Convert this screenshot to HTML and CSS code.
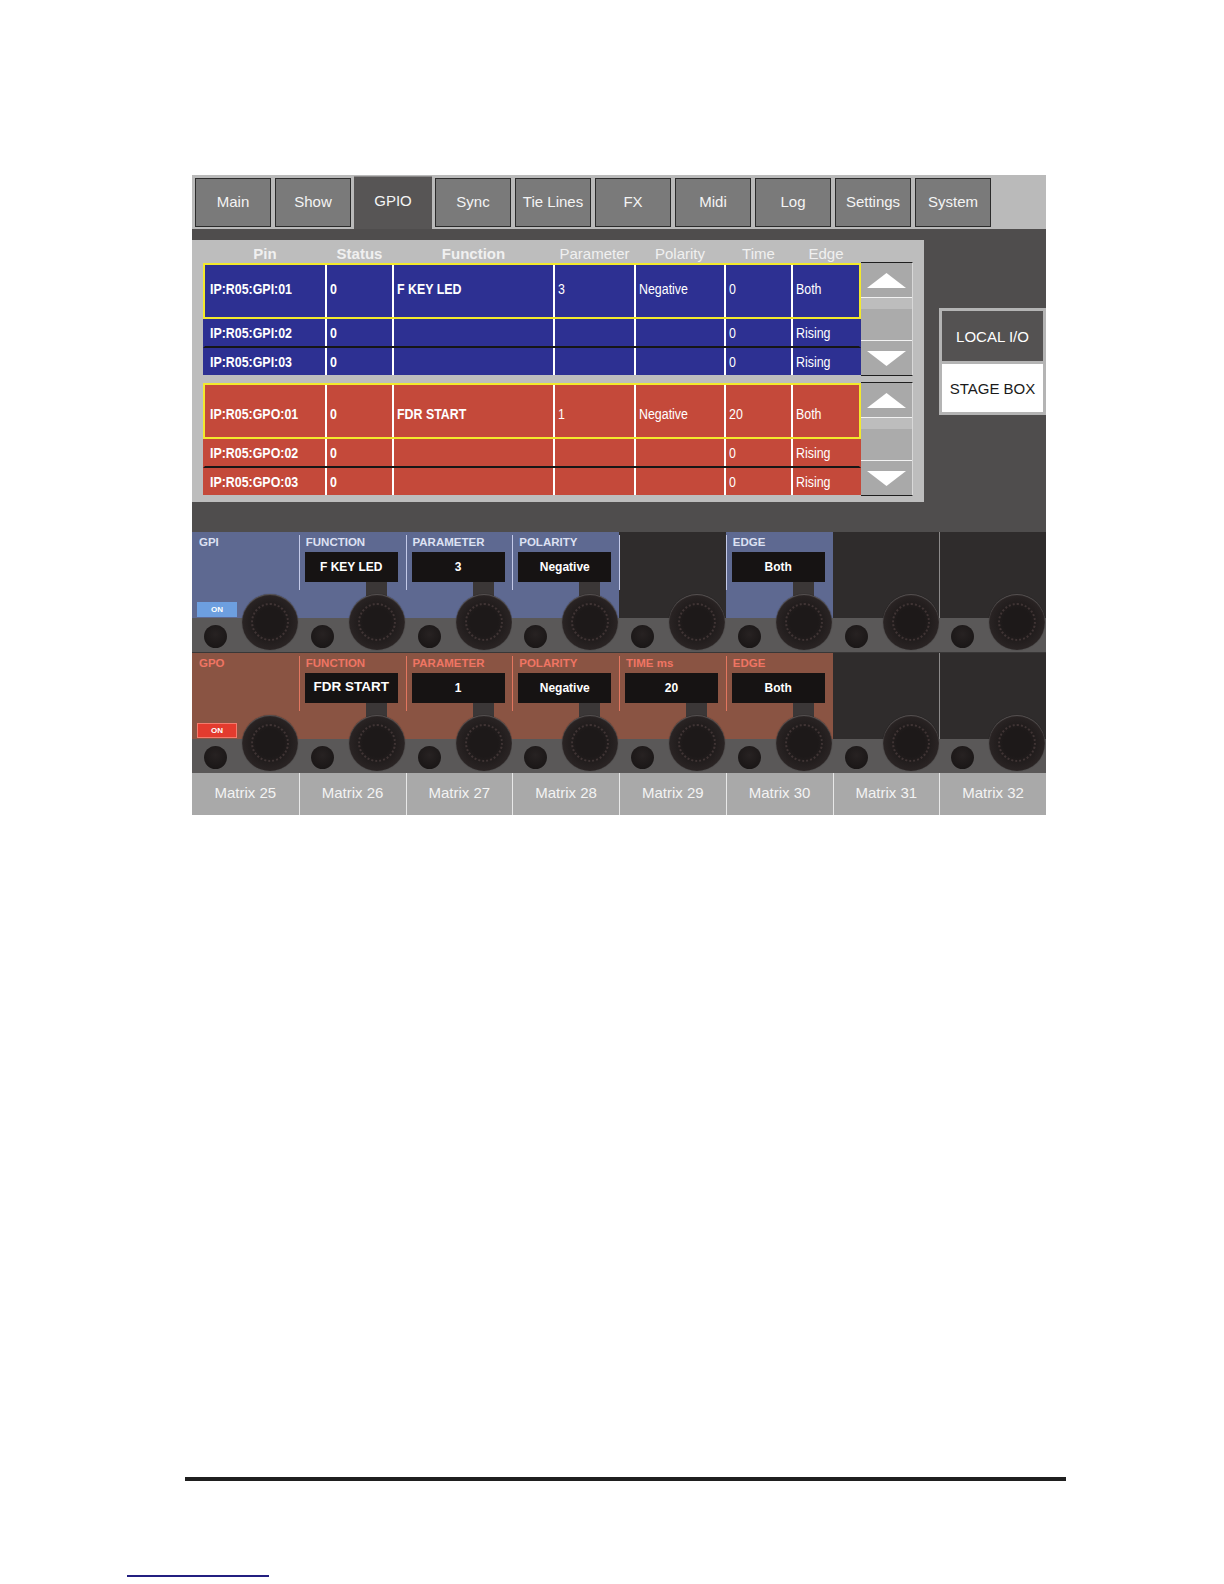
FILE: index.html
```html
<!DOCTYPE html>
<html>
<head>
<meta charset="utf-8">
<title>GPIO</title>
<link rel="stylesheet" href="styles.css">
</head>
<body>
<div class="ui">
  <div class="tabbar">
    <div class="tab">Main</div>
    <div class="tab">Show</div>
    <div class="tab active">GPIO</div>
    <div class="tab">Sync</div>
    <div class="tab">Tie Lines</div>
    <div class="tab">FX</div>
    <div class="tab">Midi</div>
    <div class="tab">Log</div>
    <div class="tab">Settings</div>
    <div class="tab">System</div>
  </div>

  <div class="main">
    <div class="panel">
      <div class="thead">
        <div class="hc w1 b">Pin</div>
        <div class="hc w2 b">Status</div>
        <div class="hc w3 b">Function</div>
        <div class="hc w4">Parameter</div>
        <div class="hc w5">Polarity</div>
        <div class="hc w6">Time</div>
        <div class="hc w7">Edge</div>
      </div>

      <div class="block">
        <div class="rows">
          <div class="row gpi sel">
            <div class="cell w1 b"><span>IP:R05:GPI:01</span></div>
            <div class="cell w2 b"><span>0</span></div>
            <div class="cell w3 b"><span>F KEY LED</span></div>
            <div class="cell w4"><span>3</span></div>
            <div class="cell w5"><span>Negative</span></div>
            <div class="cell w6"><span>0</span></div>
            <div class="cell w7"><span>Both</span></div>
          </div>
          <div class="row gpi r2">
            <div class="cell w1 b"><span>IP:R05:GPI:02</span></div>
            <div class="cell w2 b"><span>0</span></div>
            <div class="cell w3"></div>
            <div class="cell w4"></div>
            <div class="cell w5"></div>
            <div class="cell w6"><span>0</span></div>
            <div class="cell w7"><span>Rising</span></div>
          </div>
          <div class="row gpi r3">
            <div class="cell w1 b"><span>IP:R05:GPI:03</span></div>
            <div class="cell w2 b"><span>0</span></div>
            <div class="cell w3"></div>
            <div class="cell w4"></div>
            <div class="cell w5"></div>
            <div class="cell w6"><span>0</span></div>
            <div class="cell w7"><span>Rising</span></div>
          </div>
        </div>
        <div class="scroll">
          <div class="sbtn up"><svg width="39" height="15" viewBox="0 0 39 15"><polygon points="0,15 19.5,0 39,15" fill="#fff"/></svg></div>
          <div class="smid"></div>
          <div class="sbtn down"><svg width="39" height="15" viewBox="0 0 39 15"><polygon points="0,0 39,0 19.5,15" fill="#fff"/></svg></div>
        </div>
      </div>

      <div class="block">
        <div class="rows">
          <div class="row gpo sel">
            <div class="cell w1 b"><span>IP:R05:GPO:01</span></div>
            <div class="cell w2 b"><span>0</span></div>
            <div class="cell w3 b"><span>FDR START</span></div>
            <div class="cell w4"><span>1</span></div>
            <div class="cell w5"><span>Negative</span></div>
            <div class="cell w6"><span>20</span></div>
            <div class="cell w7"><span>Both</span></div>
          </div>
          <div class="row gpo r2">
            <div class="cell w1 b"><span>IP:R05:GPO:02</span></div>
            <div class="cell w2 b"><span>0</span></div>
            <div class="cell w3"></div>
            <div class="cell w4"></div>
            <div class="cell w5"></div>
            <div class="cell w6"><span>0</span></div>
            <div class="cell w7"><span>Rising</span></div>
          </div>
          <div class="row gpo r3">
            <div class="cell w1 b"><span>IP:R05:GPO:03</span></div>
            <div class="cell w2 b"><span>0</span></div>
            <div class="cell w3"></div>
            <div class="cell w4"></div>
            <div class="cell w5"></div>
            <div class="cell w6"><span>0</span></div>
            <div class="cell w7"><span>Rising</span></div>
          </div>
        </div>
        <div class="scroll">
          <div class="sbtn up"><svg width="39" height="15" viewBox="0 0 39 15"><polygon points="0,15 19.5,0 39,15" fill="#fff"/></svg></div>
          <div class="smid"></div>
          <div class="sbtn down"><svg width="39" height="15" viewBox="0 0 39 15"><polygon points="0,0 39,0 19.5,15" fill="#fff"/></svg></div>
        </div>
      </div>
    </div>

    <div class="srcbox">
      <div class="src local">LOCAL I/O</div>
      <div class="src stage">STAGE BOX</div>
    </div>
  </div>

  <div class="controls">
    <div class="crow gpi">
      <div class="ch">
        <div class="top c"><div class="lbl">GPI</div><div class="onbtn">ON</div></div>
        <div class="band"><span class="btn"></span></div><span class="knob"></span>
      </div>
      <div class="ch">
        <div class="top c sep"><div class="lbl">FUNCTION</div><div class="disp">F KEY LED</div><div class="conn"></div></div>
        <div class="band"><span class="btn"></span></div><span class="knob"></span>
      </div>
      <div class="ch">
        <div class="top c sep"><div class="lbl">PARAMETER</div><div class="disp">3</div><div class="conn"></div></div>
        <div class="band"><span class="btn"></span></div><span class="knob"></span>
      </div>
      <div class="ch">
        <div class="top c sep"><div class="lbl">POLARITY</div><div class="disp">Negative</div><div class="conn"></div></div>
        <div class="band"><span class="btn"></span></div><span class="knob"></span>
      </div>
      <div class="ch">
        <div class="top d sep"></div>
        <div class="band"><span class="btn"></span></div><span class="knob"></span>
      </div>
      <div class="ch">
        <div class="top c sep"><div class="lbl">EDGE</div><div class="disp">Both</div><div class="conn"></div></div>
        <div class="band"><span class="btn"></span></div><span class="knob"></span>
      </div>
      <div class="ch">
        <div class="top d"></div>
        <div class="band"><span class="btn"></span></div><span class="knob"></span>
      </div>
      <div class="ch">
        <div class="top d last"></div>
        <div class="band"><span class="btn"></span></div><span class="knob"></span>
      </div>
    </div>

    <div class="crow gpo">
      <div class="ch">
        <div class="top c"><div class="lbl">GPO</div><div class="onbtn">ON</div></div>
        <div class="band"><span class="btn"></span></div><span class="knob"></span>
      </div>
      <div class="ch">
        <div class="top c sep"><div class="lbl">FUNCTION</div><div class="disp big">FDR START</div><div class="conn"></div></div>
        <div class="band"><span class="btn"></span></div><span class="knob"></span>
      </div>
      <div class="ch">
        <div class="top c sep"><div class="lbl">PARAMETER</div><div class="disp">1</div><div class="conn"></div></div>
        <div class="band"><span class="btn"></span></div><span class="knob"></span>
      </div>
      <div class="ch">
        <div class="top c sep"><div class="lbl">POLARITY</div><div class="disp">Negative</div><div class="conn"></div></div>
        <div class="band"><span class="btn"></span></div><span class="knob"></span>
      </div>
      <div class="ch">
        <div class="top c sep"><div class="lbl">TIME ms</div><div class="disp">20</div><div class="conn"></div></div>
        <div class="band"><span class="btn"></span></div><span class="knob"></span>
      </div>
      <div class="ch">
        <div class="top c sep"><div class="lbl">EDGE</div><div class="disp">Both</div><div class="conn"></div></div>
        <div class="band"><span class="btn"></span></div><span class="knob"></span>
      </div>
      <div class="ch">
        <div class="top d"></div>
        <div class="band"><span class="btn"></span></div><span class="knob"></span>
      </div>
      <div class="ch">
        <div class="top d last"></div>
        <div class="band"><span class="btn"></span></div><span class="knob"></span>
      </div>
    </div>
  </div>

  <div class="labels">
    <div class="lab">Matrix 25</div>
    <div class="lab">Matrix 26</div>
    <div class="lab">Matrix 27</div>
    <div class="lab">Matrix 28</div>
    <div class="lab">Matrix 29</div>
    <div class="lab">Matrix 30</div>
    <div class="lab">Matrix 31</div>
    <div class="lab">Matrix 32</div>
  </div>
</div>

<div class="rule"></div>
<div class="link"></div>
</body>
</html>
```

FILE: styles.css
```css
* { box-sizing: border-box; }

body {
  margin: 0;
  background: #ffffff;
  font-family: "Liberation Sans", Arial, sans-serif;
}

.ui {
  width: 854px;
  margin: 175px 0 0 192px;
}

/* ---------- tab bar ---------- */
.tabbar {
  height: 54px;
  background: #bababa;
  display: flex;
  gap: 4px;
  padding: 3px 0 0 3px;
}

.tab {
  width: 76px;
  height: 49px;
  padding-bottom: 3px;
  background: #7a7a7a;
  border: 1px solid #2b2b2b;
  color: #f4f4f4;
  font-size: 15px;
  display: flex;
  align-items: center;
  justify-content: center;
  white-space: nowrap;
}

.tab.active {
  width: 78px;
  height: 53px;
  margin: -2px -1px 0 -1px;
  padding-bottom: 6px;
  background: #575555;
  border: none;
  border-top: 1px solid #8a8888;
}

/* ---------- main area ---------- */
.main {
  height: 303px;
  background: #4f4d4d;
  padding-top: 11px;
  display: flex;
  align-items: flex-start;
}

.panel {
  width: 732px;
  height: 262px;
  background: #bdbdbd;
  padding: 0 11px;
}

.thead {
  height: 23px;
  display: flex;
  padding: 3px 0 0 2px;
  color: #f0f0f0;
  font-size: 15px;
}

.hc {
  display: flex;
  justify-content: center;
  align-items: center;
  border-left: 2px solid transparent;
}
.hc.w1 { border-left: none; }

.b { font-weight: bold; }

.w1 { width: 120px; }
.w2 { width: 67px; }
.w3 { width: 161px; }
.w4 { width: 81px; }
.w5 { width: 90px; }
.w6 { width: 67px; }
.w7 { width: 68px; }

.block {
  display: flex;
  height: 112px;
}
.block + .block { margin-top: 8px; }

.rows { width: 658px; }

.row {
  display: flex;
  border-left: 2px solid transparent;
  border-right: 2px solid transparent;
  color: #ffffff;
  font-family: "Liberation Sans Narrow", "Arial Narrow", "Liberation Sans", sans-serif;
  font-size: 15.5px;
}
.row.gpi { background: #2d3092; }
.row.gpo { background: #c4493a; }

.row.sel {
  height: 56px;
  border: 2px solid #f3e92c;
}
.row.gpi.sel .cell { padding-bottom: 5px; }
.row.gpo.sel .cell { padding-top: 5px; }

.row.r2 {
  height: 29px;
  border-bottom: 2px solid #161616;
}
.row.r3 { height: 27px; }

.cell {
  display: flex;
  align-items: center;
  padding-left: 3px;
  border-left: 2px solid #ffffff;
  white-space: nowrap;
  overflow: hidden;
}
.cell.w1 {
  border-left: none;
  padding-left: 5px;
}

.cell span {
  display: inline-block;
  transform: scaleX(0.8);
  transform-origin: left center;
}

.scroll {
  width: 52px;
  height: 114px;
  margin-top: -1px;
  display: flex;
  flex-direction: column;
  border-top: 1px solid #1e1e1e;
  border-bottom: 1px solid #1e1e1e;
  border-right: 1px solid #d8d8d8;
  background: #aaaaaa;
}

.sbtn {
  height: 35px;
  display: flex;
  align-items: center;
  justify-content: center;
  background: #a9a9a9;
}
.sbtn.up { border-bottom: 1px solid #f2f2f2; }
.sbtn.down { border-top: 1px solid #f2f2f2; }

.smid {
  flex: 1;
  background: linear-gradient(#bdbdbd 0 11px, #ababab 11px);
}

.srcbox {
  width: 107px;
  margin: 68px 0 0 15px;
  border: 3px solid #b4b4b4;
}

.src {
  display: flex;
  align-items: center;
  justify-content: center;
  font-size: 15px;
}
.src.local {
  height: 50px;
  background: #545252;
  color: #ffffff;
}
.src.stage {
  height: 51px;
  background: #ffffff;
  color: #1a1a1a;
  border-top: 3px solid #b4b4b4;
}

/* ---------- control strips ---------- */
.controls {
  background: #393737;
  display: flex;
  flex-direction: column;
  gap: 1px;
}

.crow {
  height: 120px;
  display: grid;
  grid-template-columns: repeat(8, 1fr);
}

.ch {
  position: relative;
  display: flex;
  flex-direction: column;
}

.top {
  height: 86px;
  position: relative;
  display: flex;
  flex-direction: column;
}
.gpi .top.c { background: #5e6991; }
.gpo .top.c { background: #8a5443; }
.top.d { background: #2f2c2c; }
.top.last { border-left: 1px solid #8c8a8a; }

.top.sep::before {
  content: "";
  position: absolute;
  left: 0;
  top: 3px;
  width: 1px;
  height: 55px;
}
.gpi .top.sep::before { background: #c3c9e8; }
.gpo .top.sep::before { background: #e2765f; }

.lbl {
  height: 20px;
  line-height: 20px;
  padding-left: 7px;
  font-size: 11.5px;
  font-weight: bold;
  white-space: nowrap;
}
.gpi .lbl { color: #dde1f3; }
.gpo .lbl { color: #ef7563; }

.disp {
  margin-left: 6px;
  width: 93px;
  height: 30px;
  background: #161313;
  color: #ffffff;
  font-size: 12px;
  font-weight: bold;
  display: flex;
  align-items: center;
  justify-content: center;
  white-space: nowrap;
}
.disp.big {
  font-size: 13.5px;
  align-items: flex-start;
  padding-top: 6px;
}

.conn {
  margin-left: 67px;
  width: 21px;
  height: 14px;
  background: #3b3737;
}

.onbtn {
  margin: auto 0 1px 5px;
  width: 40px;
  height: 15px;
  font-size: 8px;
  font-weight: bold;
  color: #ffffff;
  display: flex;
  align-items: center;
  justify-content: center;
}
.gpi .onbtn { background: #6d9fe0; }
.gpo .onbtn {
  background: #e33b2e;
  border: 1px solid #f47a6c;
}

.band {
  height: 34px;
  background: #5a5858;
  display: flex;
  align-items: center;
  padding: 2px 0 0 12px;
}

.btn {
  width: 23px;
  height: 23px;
  border-radius: 50%;
  background: radial-gradient(circle at 50% 40%, #272222, #161313);
}

.knob {
  position: absolute;
  left: 50px;
  top: 62px;
  width: 56px;
  height: 56px;
  border-radius: 50%;
  background: radial-gradient(circle, #1d1919 0 35%, #2a2424 70%, #302a2a 100%);
  box-shadow: inset 0 1px 1px rgba(255, 255, 255, 0.22), 0 0 1px rgba(0, 0, 0, 0.6);
}
.knob::after {
  content: "";
  position: absolute;
  inset: 9px;
  border-radius: 50%;
  border: 2px dotted #3f3434;
}

/* ---------- channel labels ---------- */
.labels {
  height: 42px;
  display: grid;
  grid-template-columns: repeat(8, 1fr);
  background: #a9a9a9;
}

.lab {
  display: flex;
  align-items: center;
  justify-content: center;
  padding-bottom: 4px;
  color: #f3f3f3;
  font-size: 15px;
  border-left: 1px solid #e8e8e8;
}
.lab:first-child { border-left: none; }

/* ---------- page furniture ---------- */
.rule {
  margin: 662px 0 0 185px;
  width: 881px;
  height: 4px;
  background: #1f1f1f;
}

.link {
  margin: 94px 0 0 127px;
  width: 142px;
  height: 2px;
  background: #231f80;
}
```
